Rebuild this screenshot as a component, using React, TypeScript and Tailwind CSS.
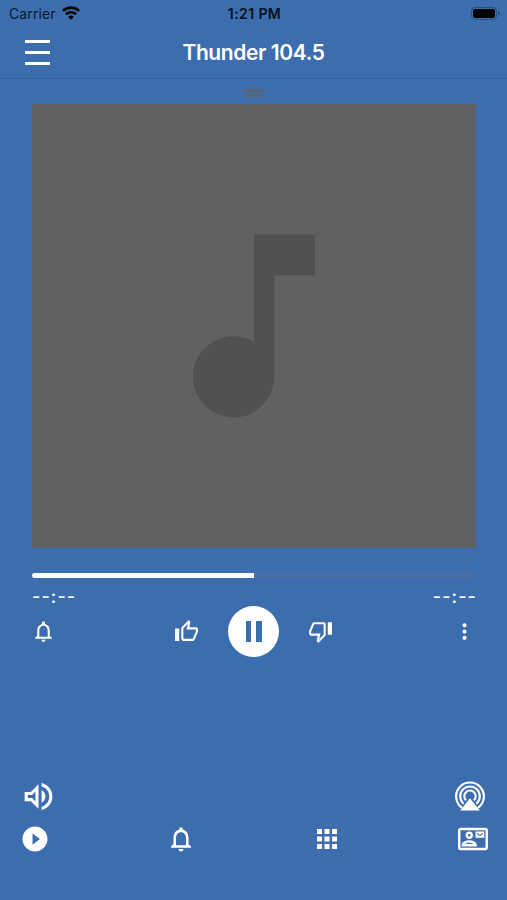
import type { ReactNode } from "react"

interface IconProps {
    d: string
    className?: string
}

const Icon = ({ d, className }: IconProps) => (
    <svg viewBox="0 0 24 24" fill="currentColor" className={className}>
        <path d={d} />
    </svg>
)

const icons = {
    note: "M12 3v10.55c-.59-.34-1.27-.55-2-.55-2.21 0-4 1.79-4 4s1.79 4 4 4 4-1.79 4-4V7h4V3h-6z",
    bell: "M12 22c1.1 0 2-.9 2-2h-4c0 1.1.9 2 2 2zm6-6v-5c0-3.07-1.63-5.64-4.5-6.32V4c0-.83-.67-1.5-1.5-1.5s-1.5.67-1.5 1.5v.68C7.64 5.36 6 7.92 6 11v5l-2 2v1h16v-1l-2-2zm-2 1H8v-6c0-2.48 1.51-4.5 4-4.5s4 2.02 4 4.5v6z",
    thumbUp: "M9 21h9c.83 0 1.54-.5 1.84-1.22l3.02-7.05c.09-.23.14-.47.14-.73v-2c0-1.1-.9-2-2-2h-6.31l.95-4.57.03-.32c0-.41-.17-.79-.44-1.06L14.17 1 7.58 7.59C7.22 7.95 7 8.45 7 9v10c0 1.1.9 2 2 2zM9 9l4.34-4.34L12 10h9v2l-3 7H9V9zM1 9h4v12H1z",
    thumbDown: "M15 3H6c-.83 0-1.54.5-1.84 1.22l-3.02 7.05c-.09.23-.14.47-.14.73v2c0 1.1.9 2 2 2h6.31l-.95 4.57-.03.32c0 .41.17.79.44 1.06L9.83 23l6.59-6.59c.36-.36.58-.86.58-1.41V5c0-1.1-.9-2-2-2zm0 12l-4.34 4.34L12 14H3v-2l3-7h9v10zm4-12h4v12h-4z",
    more: "M12 8c1.1 0 2-.9 2-2s-.9-2-2-2-2 .9-2 2 .9 2 2 2zm0 2c-1.1 0-2 .9-2 2s.9 2 2 2 2-.9 2-2-.9-2-2-2zm0 6c-1.1 0-2 .9-2 2s.9 2 2 2 2-.9 2-2-.9-2-2-2z",
    volume: "M3 9v6h4l5 5V4L7 9H3zm7-.17v6.34L7.83 13H5v-2h2.83L10 8.83zM16.5 12c0-1.77-1.02-3.29-2.5-4.03v8.05c1.48-.73 2.5-2.25 2.5-4.02zM14 3.23v2.06c2.89.86 5 3.54 5 6.71s-2.11 5.85-5 6.71v2.06c4.01-.91 7-4.49 7-8.77s-2.99-7.86-7-8.77z",
    play: "M12 2C6.48 2 2 6.48 2 12s4.48 10 10 10 10-4.48 10-10S17.52 2 12 2zm-2 14.5v-9l6 4.5-6 4.5z",
    apps: "M4 8h4V4H4v4zm6 12h4v-4h-4v4zm-6 0h4v-4H4v4zm0-6h4v-4H4v4zm6 0h4v-4h-4v4zm6-10v4h4V4h-4zm-6 4h4V4h-4v4zm6 6h4v-4h-4v4zm0 6h4v-4h-4v4z",
    contact: "M22 3H2C.9 3 0 3.9 0 5v14c0 1.1.9 2 2 2h20c1.1 0 1.99-.9 1.99-2L24 5c0-1.1-.9-2-2-2zm0 16H2V5h20v14zM21 6h-7v5h7V6zm-1 2l-2.5 1.75L15 8V7l2.5 1.75L20 7v1zM9 12c1.65 0 3-1.35 3-3s-1.35-3-3-3-3 1.35-3 3 1.35 3 3 3zm0-4c.55 0 1 .45 1 1s-.45 1-1 1-1-.45-1-1 .45-1 1-1zm6 8.59c0-2.5-3.97-3.58-6-3.58s-6 1.08-6 3.58V18h12v-1.41zM5.48 16c.74-.5 2.22-1 3.52-1s2.77.49 3.52 1H5.48z",
}

const IconButton = ({ label, className, children }: { label: string; className?: string; children: ReactNode }) => (
    <button type="button" aria-label={label} className={`flex items-center justify-center ${className ?? ""}`}>
        {children}
    </button>
)

const StatusBar = () => (
    <div className="grid h-7 grid-cols-3 items-center pl-[9px] pr-[7px] text-[14px] leading-none text-[#0b1a2c]">
        <div className="flex items-center gap-[6px]">
            <span className="tracking-[0.1px]">Carrier</span>
            <svg viewBox="0 0 18 14" className="mb-[2px] h-[14px] w-[18px] text-black" fill="none" stroke="currentColor" strokeWidth="2.6">
                <path d="M1 4.9a11.4 11.4 0 0 1 16 0" />
                <path d="M4 8.2a7.2 7.2 0 0 1 10 0" />
                <path d="M9 13.8 6.2 10.9a4 4 0 0 1 5.6 0z" fill="currentColor" stroke="none" />
            </svg>
        </div>
        <div className="text-center font-semibold tracking-[0.4px] text-[#06101d]">1:21 PM</div>
        <div className="mb-[2px] flex items-center justify-end gap-px">
            <div className="h-[13px] w-[26px] rounded-[4px] border border-[#28507f] p-px">
                <div className="h-full rounded-[2px] bg-black" />
            </div>
            <div className="h-1 w-[2px] rounded-r-full bg-[#28507f]" />
        </div>
    </div>
)

const Header = () => (
    <div className="grid h-[51px] grid-cols-[60px_1fr_60px] items-center border-b border-[#3563a0] pb-[2px]">
        <IconButton label="Menu" className="ml-[25px] w-[25px] flex-col gap-2">
            <span className="h-[3px] w-full bg-white" />
            <span className="h-[3px] w-full bg-white" />
            <span className="h-[3px] w-full bg-white" />
        </IconButton>
        <h1 className="text-center text-[21px] font-semibold leading-none tracking-[-0.4px]">Thunder 104.5</h1>
    </div>
)

const Player = () => (
    <div className="flex flex-col pl-8 pr-[31px]">
        <div className="flex h-[25px] flex-col items-center justify-end gap-[2px] pb-[7px]">
            <div className="h-[3px] w-5 bg-[#5c6470]" />
            <div className="h-[3px] w-5 bg-[#5c6470]" />
        </div>
        <div className="flex h-[444px] items-center justify-center bg-[#616161] text-[#515151]">
            <Icon d={icons.note} className="size-[244px]" />
        </div>
        <div className="mt-[25px] h-[5px] rounded-full bg-[#496ea5]">
            <div className="h-full w-1/2 rounded-l-full bg-white" />
        </div>
        <div className="mt-[9px] flex h-5 items-center justify-between text-[18px] font-medium leading-none tracking-[1.1px]">
            <span>--:--</span>
            <span className="-mr-px">--:--</span>
        </div>
        <div className="mt-[-1px] flex h-[51px] items-center justify-between">
            <IconButton label="Alerts" className="-ml-px w-6">
                <Icon d={icons.bell} className="size-[25px] shrink-0" />
            </IconButton>
            <div className="flex items-center gap-[29px]">
                <IconButton label="Like" className="w-[25px]">
                    <Icon d={icons.thumbUp} className="size-[25px]" />
                </IconButton>
                <IconButton label="Pause" className="size-[51px] gap-[5px] rounded-full bg-white">
                    <span className="h-[21px] w-[5.5px] bg-[#3c6dae]" />
                    <span className="h-[21px] w-[5.5px] bg-[#3c6dae]" />
                </IconButton>
                <IconButton label="Dislike" className="w-[25px]">
                    <Icon d={icons.thumbDown} className="size-[25px]" />
                </IconButton>
            </div>
            <IconButton label="More" className="w-6">
                <Icon d={icons.more} className="size-[25px] shrink-0" />
            </IconButton>
        </div>
    </div>
)

const AirPlay = () => (
    <svg viewBox="0 0 30 30" className="mb-[2px] size-[30px]" fill="none" stroke="currentColor" strokeWidth="2.1">
        <path d="M7.2 26.9a13.9 13.9 0 1 1 15.6 0" />
        <path d="M8.7 22.8a9.8 9.8 0 1 1 12.6 0" />
        <path d="M11 19.3a5.7 5.7 0 1 1 8 0" />
        <path d="M15 17.2 24.8 29.5H5.2z" fill="currentColor" stroke="none" />
    </svg>
)

const BottomBar = () => (
    <div className="mt-[121px] flex flex-col pl-5 pr-[19px]">
        <div className="flex h-[37px] items-center justify-between">
            <IconButton label="Volume">
                <Icon d={icons.volume} className="size-[37px]" />
            </IconButton>
            <IconButton label="AirPlay" className="mr-[3px]">
                <AirPlay />
            </IconButton>
        </div>
        <div className="mt-[9px] flex items-center justify-between">
            <IconButton label="Play"><Icon d={icons.play} className="size-[30px]" /></IconButton>
            <IconButton label="Alarms"><Icon d={icons.bell} className="size-[30px]" /></IconButton>
            <IconButton label="Apps"><Icon d={icons.apps} className="size-[30px]" /></IconButton>
            <IconButton label="Contact"><Icon d={icons.contact} className="size-[30px]" /></IconButton>
        </div>
    </div>
)

export default function App() {
    return (
        <div className="h-[900px] w-[507px] overflow-hidden bg-[#3c6dae] font-['Inter',sans-serif] text-white">
            <StatusBar />
            <Header />
            <Player />
            <BottomBar />
        </div>
    )
}
